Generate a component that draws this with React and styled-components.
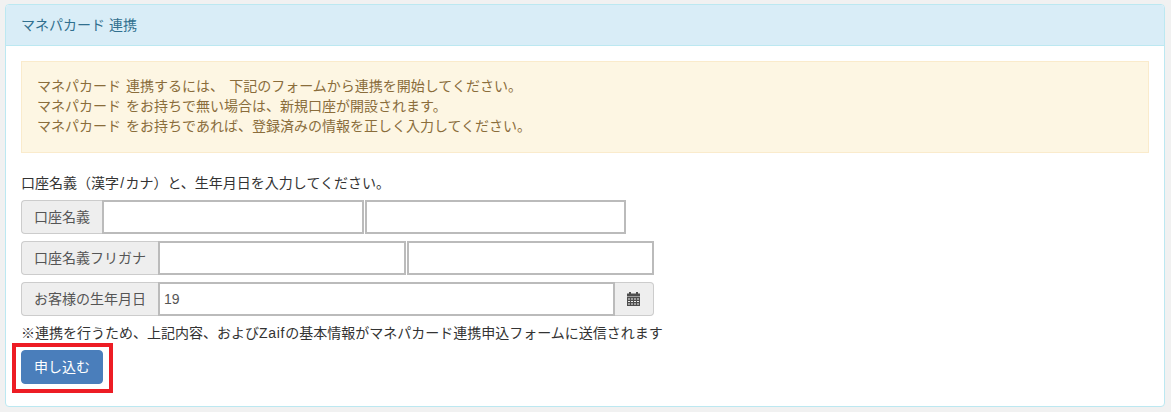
import React from "react";
import styled, { createGlobalStyle } from "styled-components";

const GlobalStyle = createGlobalStyle`
  html, body {
    margin: 0;
    padding: 0;
    background: #f1f1f1;
  }
  *, *::after {
    box-sizing: border-box;
  }
  body {
    font-family: "Liberation Sans", "Noto Sans CJK JP", sans-serif;
    font-size: 14px;
    line-height: 20px;
    color: #333;
  }
`;

const Page = styled.div`
  padding: 4px 6px 5px 5px;
`;

const Panel = styled.div`
  height: 403px;
  background: #fff;
  border: 1px solid #bce8f1;
  border-radius: 4px;
`;

const PanelHeading = styled.div`
  height: 41px;
  padding: 10px 15px;
  background: #d9edf7;
  border-bottom: 1px solid #bce8f1;
  border-radius: 3px 3px 0 0;
  color: #31708f;
`;

const PanelBody = styled.div`
  padding: 15px;
`;

const Alert = styled.div`
  height: 92px;
  padding: 14px 15px 15px;
  margin-bottom: 20px;
  background: #fdf6e3;
  border: 1px solid #faebcc;
  color: #8a6d3b;
  word-spacing: 1.2px;
`;

const Line = styled.div`
  height: 20px;
  white-space: nowrap;
`;

const Slash = styled.span`
  margin: 0 1.25px;
`;

const Latin = styled.span`
  letter-spacing: 0.7px;
`;

const Rows = styled.div`
  display: flex;
  flex-direction: column;
  gap: 7px;
  margin: 7px 0;
`;

const InputGroup = styled.div`
  display: flex;
  height: 34px;
  width: ${(p) => p.$width}px;
`;

const Addon = styled.span`
  flex: none;
  width: ${(p) => p.$width}px;
  padding: 6px 12px;
  display: flex;
  align-items: center;
  justify-content: center;
  background: #eee;
  border: 1px solid #ccc;
  color: #555;
  white-space: nowrap;
  border-radius: ${(p) => (p.$right ? "0 4px 4px 0" : "4px 0 0 4px")};
  ${(p) => (p.$right ? "border-left: 0;" : "border-right: 0;")}
`;

const Field = styled.input`
  flex: 1 1 0;
  min-width: 0;
  height: 34px;
  padding: 1px 4px;
  margin: 0;
  border: 2px solid #bbb;
  border-radius: 0;
  background: #fff;
  font: inherit;
  color: #555;
  outline: none;
`;

const FieldGap = styled.span`
  flex: none;
  width: 1px;
`;

const SubmitButton = styled.button`
  position: relative;
  display: block;
  width: 82px;
  height: 34px;
  margin-top: 7px;
  padding: 6px 12px;
  background: #4a7ebb;
  border: 1px solid #4a7ebb;
  border-radius: 4px;
  color: #fff;
  font: inherit;

  &::after {
    content: "";
    position: absolute;
    left: -10px;
    top: -8px;
    width: 101px;
    height: 50px;
    border: 4.5px solid #ed1c24;
  }
`;

function CalendarIcon() {
  return (
    <svg width="14" height="14" viewBox="1 0 14 14" fill="#4d4d4d">
      <rect x="3" y="0" width="2" height="3" />
      <rect x="10" y="0" width="2" height="3" />
      <rect x="1" y="1.5" width="13" height="3" />
      <path
        fillRule="evenodd"
        d="M1 5h13v9H1zM2 6.5v1h2v-1zM5 6.5v1h2v-1zM8 6.5v1h2v-1zM11 6.5v1h2v-1zM2 9v1h2V9zM5 9v1h2V9zM8 9v1h2V9zM11 9v1h2V9zM2 11.5v1h2v-1zM5 11.5v1h2v-1zM8 11.5v1h2v-1zM11 11.5v1h2v-1z"
      />
    </svg>
  );
}

function App() {
  return (
    <Page>
      <GlobalStyle />
      <Panel>
        <PanelHeading>マネパカード 連携</PanelHeading>
        <PanelBody>
          <Alert>
            <Line>マネパカード 連携するには、 下記のフォームから連携を開始してください。</Line>
            <Line>マネパカード をお持ちで無い場合は、新規口座が開設されます。</Line>
            <Line>マネパカード をお持ちであれば、登録済みの情報を正しく入力してください。</Line>
          </Alert>
          <Line>
            口座名義（漢字<Slash>/</Slash>カナ）と、生年月日を入力してください。
          </Line>
          <Rows>
            <InputGroup $width={605}>
              <Addon $width={81}>口座名義</Addon>
              <Field />
              <FieldGap />
              <Field />
            </InputGroup>
            <InputGroup $width={633}>
              <Addon $width={137}>口座名義フリガナ</Addon>
              <Field />
              <FieldGap />
              <Field />
            </InputGroup>
            <InputGroup $width={633}>
              <Addon $width={137}>お客様の生年月日</Addon>
              <Field defaultValue="19" />
              <Addon $width={39} $right>
                <CalendarIcon />
              </Addon>
            </InputGroup>
          </Rows>
          <Line>
            ※連携を行うため、上記内容、および<Latin>Zaif</Latin>の基本情報がマネパカード連携申込フォームに送信されます
          </Line>
          <SubmitButton type="button">申し込む</SubmitButton>
        </PanelBody>
      </Panel>
    </Page>
  );
}

export default App;
